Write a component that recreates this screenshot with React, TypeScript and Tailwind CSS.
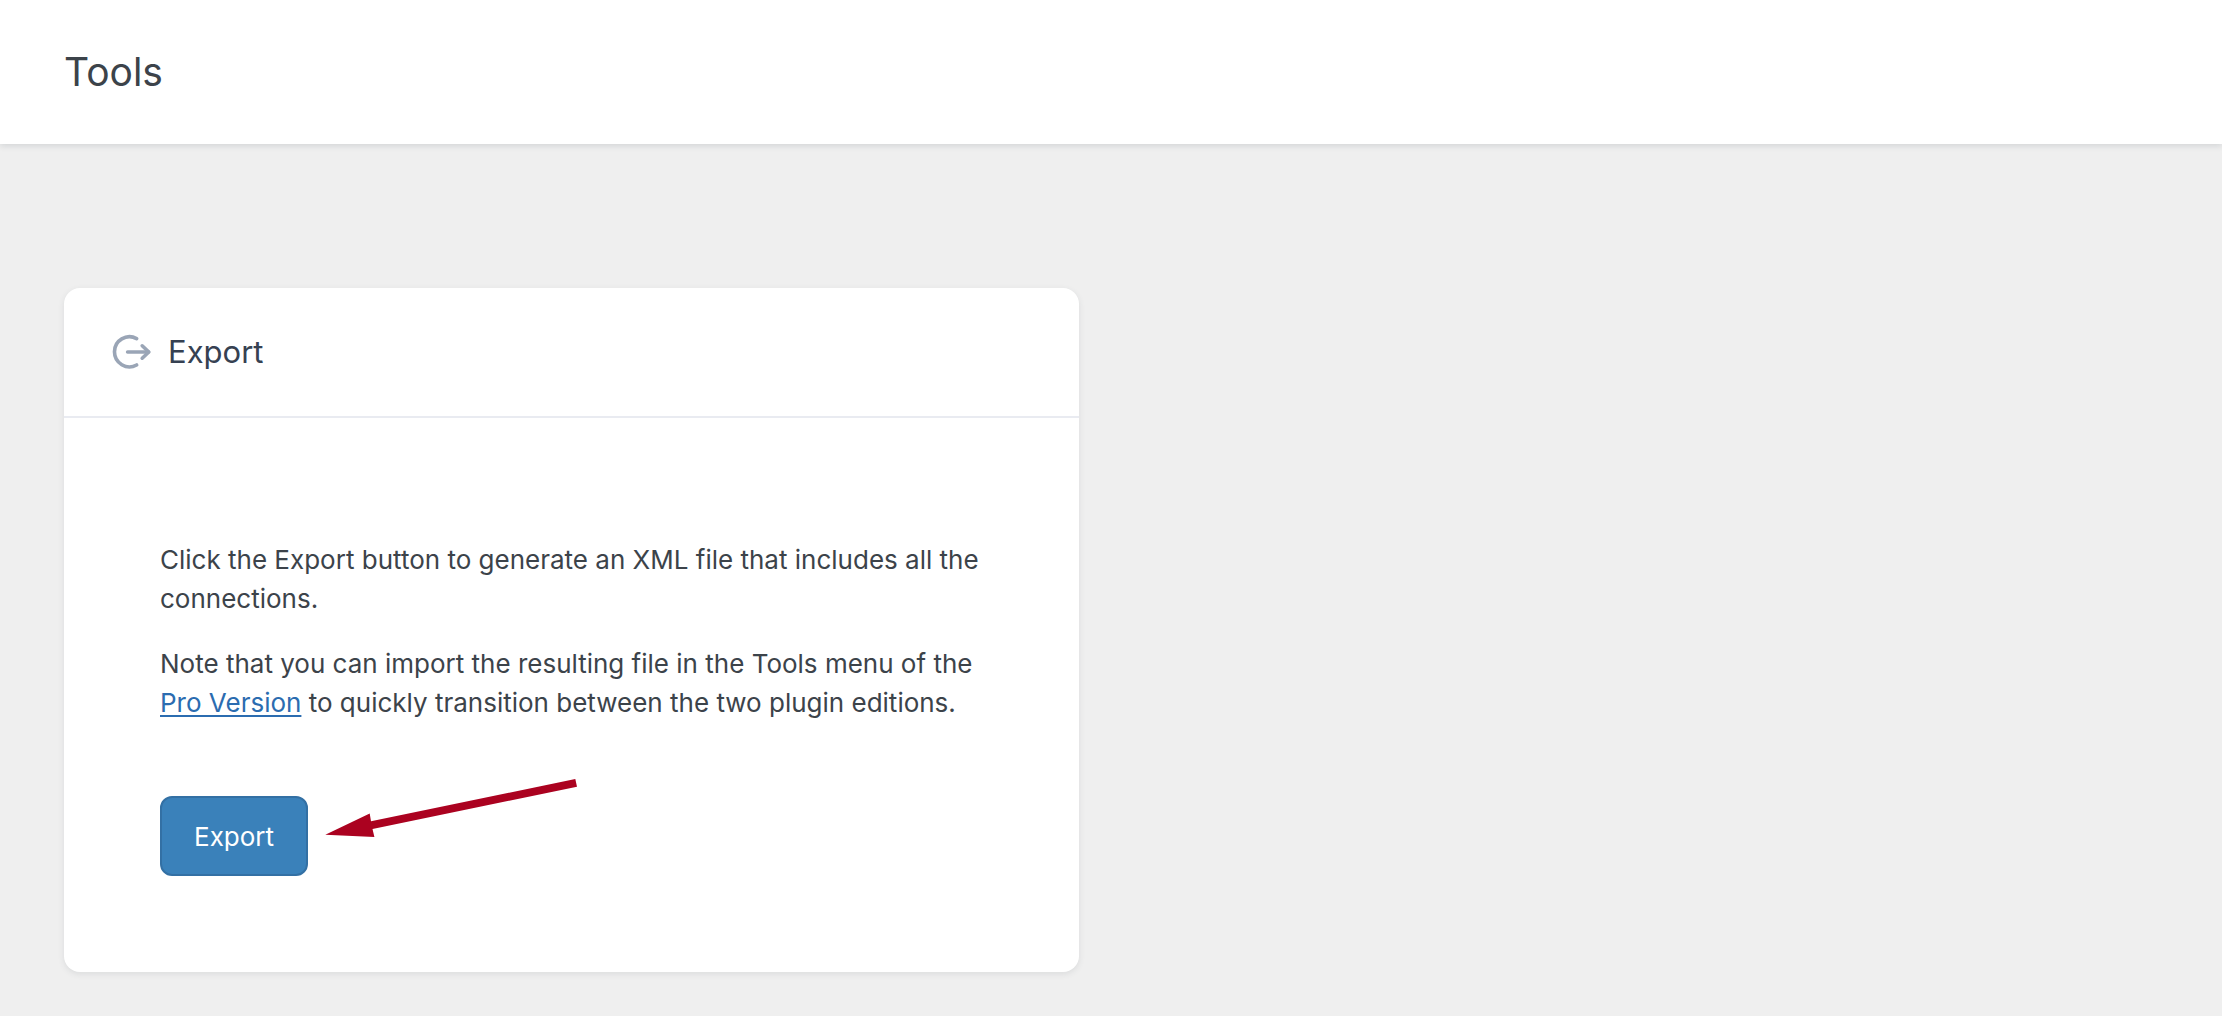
import React from "react";

const ExportIcon = () => {
  return (
    <svg
      className="h-9 w-10 shrink-0 text-[#9aa5b6]"
      viewBox="0 0 40 36"
      fill="none"
      stroke="currentColor"
      strokeWidth="3.6"
      strokeLinecap="round"
      strokeLinejoin="round"
      aria-hidden="true"
    >
      <path d="M24.6 4.6A15 15 0 1 0 24.6 31" />
      <path d="M15.6 18H36.5" />
      <path d="M30.2 11.8L36.8 18L30.2 24.2" />
    </svg>
  );
};

const Arrow = () => {
  return (
    <svg
      className="absolute left-full -top-5 ml-4 h-[64px] w-[256px]"
      viewBox="323 776 256 64"
      fill="#ab0220"
      aria-hidden="true"
    >
      <path d="M324.3 834.7L368.7 813.6L370 821.3L574.3 779L576 786.7L371.5 829L373.4 837Z" />
    </svg>
  );
};

const ExportCard = () => {
  return (
    <section className="rounded-2xl bg-white shadow-[0_2px_6px_rgba(45,55,72,0.1)]">
      {/* Card heading */}
      <div className="flex items-center gap-4 border-b-2 border-[#e9ebf1] px-12 py-10">
        <ExportIcon />
        <h2 className="text-[31px] leading-[48px] text-[#364152]">Export</h2>
      </div>

      {/* Card body */}
      <div className="p-24 text-[26px] leading-[39px]">
        <p className="my-[26px]">
          Click the Export button to generate an XML file that includes all the
          connections.
        </p>
        <p className="my-[26px]">
          Note that you can import the resulting file in the Tools menu of the{" "}
          <a
            href="#pro"
            className="text-[#2b6cb0] underline decoration-2 underline-offset-3"
          >
            Pro Version
          </a>{" "}
          to quickly transition between the two plugin editions.
        </p>
        <div className="relative mt-[74px] w-fit">
          <button
            type="button"
            className="block h-20 rounded-xl border-2 border-[#3370a4] bg-[#3a81ba] px-8 text-white"
          >
            Export
          </button>
          <Arrow />
        </div>
      </div>
    </section>
  );
};

const App = () => {
  return (
    <div className="min-h-screen bg-[#efefef] font-['Inter',sans-serif] text-[#3c434a]">
      <header className="bg-white px-16 py-12 shadow-[0_2px_6px_rgba(45,55,72,0.14)]">
        <h1 className="text-[39px] leading-[48px]">Tools</h1>
      </header>
      <main className="grid gap-16 px-16 pt-36 pb-11 lg:grid-cols-2">
        <ExportCard />
      </main>
    </div>
  );
};

export default App;
